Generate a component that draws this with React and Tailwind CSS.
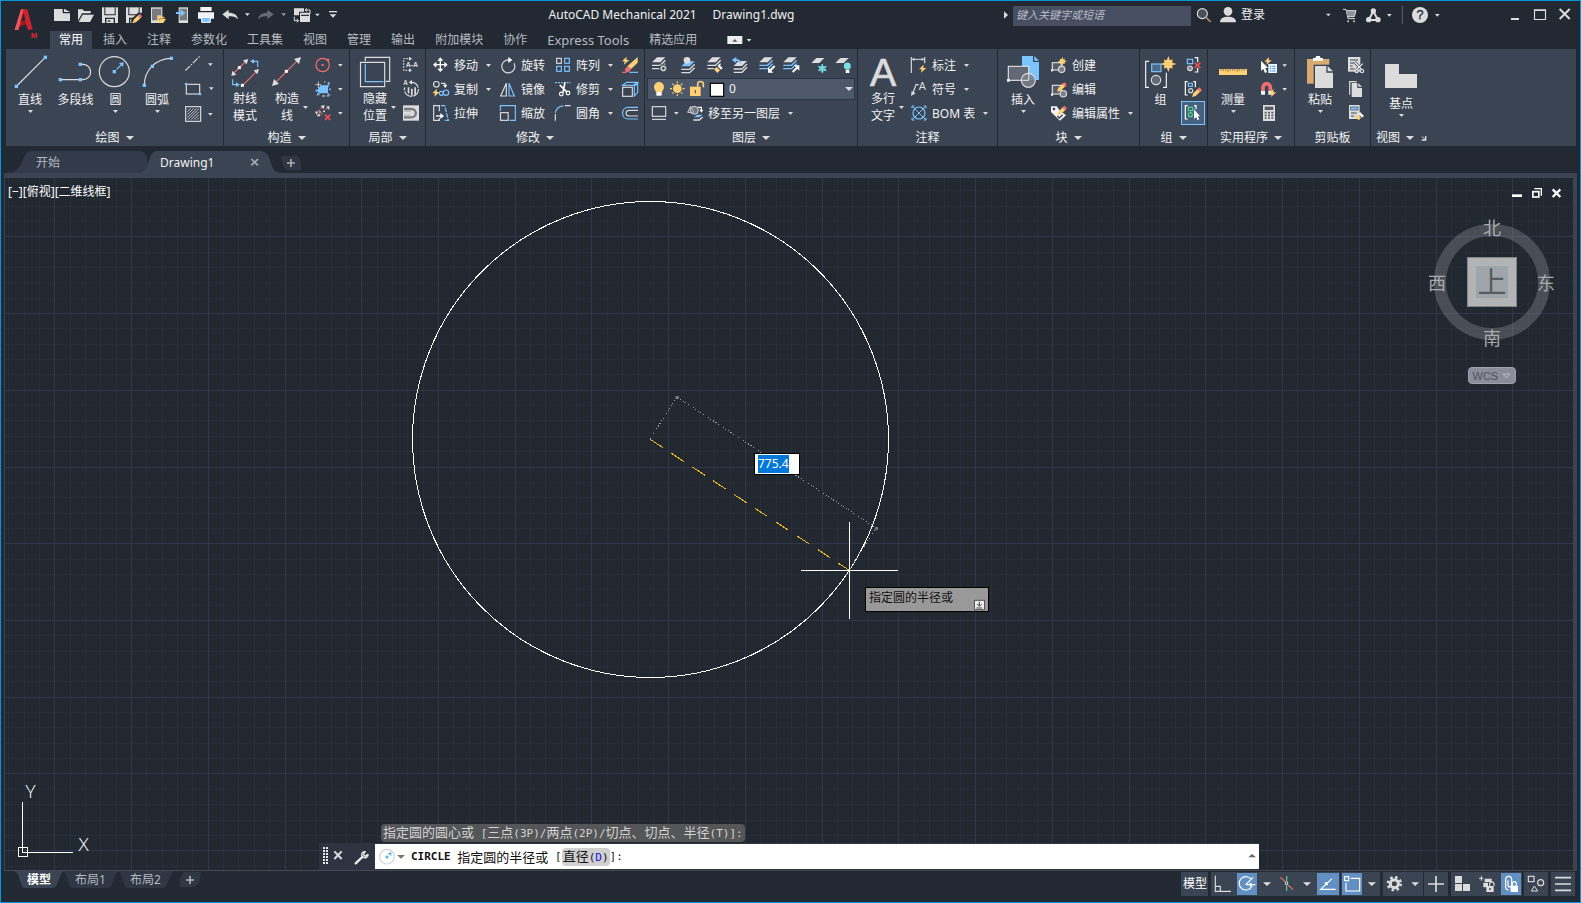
import React from "react";

const L = "#dcdcdc";
const B = "#7cc4ff";
const Y = "#ffd075";
const R = "#f26d6d";
const D = "#222933";
const K = "#3b4453";

/* Icons are drawn on a grid of three units per pixel. */
function Ico({ v, children, className = "" }) {
  return (
    <svg
      aria-hidden="true"
      className={"block shrink-0 " + className}
      width={v[2] / 3}
      height={v[3] / 3}
      viewBox={v.join(" ")}
      fill="none"
      stroke={L}
      strokeWidth="3.5"
    >
      {children}
    </svg>
  );
}

const P = ({ d, c = L, w, ...o }) => <path d={d} stroke={c} strokeWidth={w} {...o} />;
const F = ({ d, c = L }) => <path d={d} fill={c} stroke="none" />;
const Sq = ({ x, y, c = B, s = 10 }) => (
  <rect x={x - s / 2} y={y - s / 2} width={s} height={s} fill={c} stroke="none" />
);
const Tri = ({ x, y, c = L, w = 7 }) => <F d={`M${x - w} ${y - 4}H${x + w}L${x} ${y + 4}Z`} c={c} />;
const Bolt = ({ x, y }) => (
  <F d={`M${x + 3} ${y - 12}L${x - 11} ${y + 2}H${x - 3}L${x - 5} ${y + 12}L${x + 11} ${y - 2}H${x + 2}Z`} c={Y} />
);
const Pencil = ({ x, y }) => (
  <>
    <F d={`M${x} ${y}L${x + 4} ${y - 11}L${x + 18} ${y - 25}L${x + 26} ${y - 17}L${x + 11} ${y - 3}Z`} c={Y} />
    <F d={`M${x + 16} ${y - 23}L${x + 22} ${y - 29}L${x + 30} ${y - 21}L${x + 24} ${y - 15}Z`} c={R} />
  </>
);
const Star = ({ x, y, r }) => {
  const pts = [];
  for (let i = 0; i < 16; i++) {
    const q = i % 2 ? r * 0.5 : i % 4 ? r * 0.8 : r;
    const a = (i * Math.PI) / 8;
    pts.push(`${x + q * Math.sin(a)} ${y - q * Math.cos(a)}`);
  }
  return <F d={"M" + pts.join("L") + "Z"} c={Y} />;
};
const Stack = ({ x, y, top = L, mid = L, low = L }) => (
  <>
    <F d={`M${x + 15} ${y}H${x + 40}L${x + 25} ${y + 15}H${x}Z`} c={top} />
    <P d={`M${x} ${y + 24}H${x + 25}L${x + 40} ${y + 9}`} c={mid} w="4" />
    <P d={`M${x} ${y + 34}H${x + 25}L${x + 40} ${y + 19}`} c={low} w="4" />
  </>
);
const Floppy = ({ x }) => (
  <>
    <F d={`M${x} 22H${x + 48}V69H${x}Z`} />
    <F d={`M${x + 7} 22H${x + 10}V43H${x + 38}V22H${x + 41}V46H${x + 7}ZM${x + 9} 53H${x + 39}V69H${x + 9}Z`} c={D} />
    <F d={`M${x + 13} 57H${x + 35}V69H${x + 13}Z`} />
    <F d={`M${x + 17} 61H${x + 25}V65H${x + 17}Z`} c={D} />
  </>
);

function Caret({ big = false, className = "" }) {
  return big ? (
    <svg aria-hidden="true" className={"shrink-0 " + className} width="8" height="4" viewBox="0 0 8 4"><path d="M0 0H8L4 4Z" fill={L} /></svg>
  ) : (
    <svg aria-hidden="true" className={"shrink-0 " + className} width="5" height="3" viewBox="0 0 5 3"><path d="M0 0H5L2.5 3Z" fill={L} /></svg>
  );
}

function Panel({ title, className, arrow = true, extra, children }) {
  return (
    <section aria-label={title} className={"flex shrink-0 flex-col bg-[#3b4453] pt-1 " + className}>
      <div className="flex h-[72px]">{children}</div>
      <div className="flex h-[21px] items-center justify-center gap-1.5 pt-1">
        <span>{title}</span>
        {arrow && <Caret big />}
        {extra}
      </div>
    </section>
  );
}

function Big({ v, label, arrow = true, children }) {
  return (
    <button type="button" className="flex shrink-0 flex-col items-center">
      <Ico v={v}>{children}</Ico>
      <span className="h-[19px] leading-5">{label}</span>
      {arrow && <Caret className="mt-px" />}
    </button>
  );
}

function Big2({ v, a, b, arrow = true, children }) {
  return (
    <button type="button" className="flex shrink-0 flex-col items-center" aria-label={a + b}>
      <Ico v={v} className="overflow-visible">{children}</Ico>
      <span className="grid grid-cols-[9px_auto_9px] items-center leading-[17px]">
        <span />
        <span className="text-center">{a}<br />{b}</span>
        {arrow && <Caret className="justify-self-end" />}
      </span>
    </button>
  );
}

function Small({ v, label, arrow, name, active, children }) {
  return (
    <button
      type="button"
      aria-label={label || name}
      className={"flex h-6 items-center whitespace-nowrap text-left " + (active ? "bg-[#46617f] outline outline-1 -outline-offset-1 outline-[#7cc4ff]" : "")}
    >
      <Ico v={v}>{children}</Ico>
      {label && <span className="pt-0.5">{label}</span>}
      {arrow && <Caret className="ml-2" />}
    </button>
  );
}

const Col = ({ children, className = "" }) => <div className={"flex shrink-0 flex-col items-start " + className}>{children}</div>;

function QuickButton({ v, name, children }) {
  return <button type="button" aria-label={name} title={name}><Ico v={v}>{children}</Ico></button>;
}

function Header() {
  const tabs = ["插入", "注释", "参数化", "工具集", "视图", "管理", "输出", "附加模块", "协作"];
  return (
    <header className="flex">
      <button type="button" aria-label="AutoCAD" className="w-[49px] shrink-0">
        <Ico v={[3, 3, 147, 144]}>
          <F d="M44 90L63 28H82L98 88L84 90L78 72L58 80L55 90ZM62 66L76 61L71 40Z" c="#c9232d" />
          <F d="M44 90L63 28H70L55 90Z" c="#e8575c" />
          <F d="M58 80L74 58L78 72Z" c="#8e1820" />
          <text x="92" y="113" fontSize="23" fontWeight="700" fontFamily="Liberation Sans, sans-serif" fill="#e02a2f" stroke="none">M</text>
        </Ico>
      </button>
      <div className="min-w-0 grow">
        <div className="flex h-[30px] items-center">
          <QuickButton name="新建" v={[150, 3, 72, 90]}>
            <F d="M162 27H188V40H210V63H162Z" /><F d="M192 26L210 36H192Z" />
          </QuickButton>
          <QuickButton name="打开" v={[222, 3, 72, 90]}>
            <F d="M234 62V28H248L252 33H272V40H246Z" /><F d="M248 44H282L270 66H236Z" />
          </QuickButton>
          <QuickButton name="保存" v={[294, 3, 72, 90]}><Floppy x={306} /></QuickButton>
          <QuickButton name="另存为" v={[366, 3, 72, 90]}>
            <Floppy x={378} /><F d="M394 72V58L414 38H430V72Z" c={D} /><Pencil x={397} y={70} />
          </QuickButton>
          <QuickButton name="从移动设备打开" v={[438, 3, 72, 90]}>
            <F d="M453 22H487V69H453Z" /><F d="M456 26H484V61H456Z" c="#777b80" />
            <F d="M472 69V46H482L485 50H493V54H480Z" c={Y} /><F d="M482 56H498L490 69H474Z" c={Y} />
          </QuickButton>
          <QuickButton name="保存到移动设备" v={[510, 3, 72, 90]}>
            <F d="M536 22H564V69H536Z" /><F d="M539 26H561V61H539Z" c="#777b80" />
            <F d="M528 36H542V28L556 39L542 50V42H528Z" c={B} />
          </QuickButton>
          <QuickButton name="打印" v={[582, 3, 72, 90]}>
            <F d="M601 21H635V33H601ZM594 37H642V56H594Z" c="#f2f2f2" /><path d="M605 52H631V67H605Z" fill={B} stroke="#fff" strokeWidth="3" />
          </QuickButton>
          <QuickButton name="放弃" v={[654, 3, 108, 90]}>
            <F d="M667 43L686 29V38C702 38 712 44 714 58C706 50 700 48 686 49V58Z" /><Tri x={742} y={44} />
          </QuickButton>
          <QuickButton name="重做" v={[762, 3, 108, 90]}>
            <F d="M821 43L802 29V38C786 38 776 44 774 58C782 50 788 48 802 49V58Z" c="#646a73" /><Tri x={851} y={44} c="#9a9ea5" />
          </QuickButton>
          <QuickButton name="切换窗口" v={[870, 3, 102, 90]}>
            <F d="M882 25H912V35H897V46H882ZM900 38H930V66H900Z" /><P d="M903 46H927" c={D} />
            <P d="M930 42V30H916M921 25L915 30L921 35M883 50V62H895M890 57L896 62L890 67" w="3" /><Tri x={952} y={45} />
          </QuickButton>
          <QuickButton name="自定义" v={[972, 3, 54, 90]}>
            <P d="M987 35H1011" w="4" /><F d="M989 43H1009L999 53Z" />
          </QuickButton>
          <h1 className="flex grow justify-center gap-4 whitespace-nowrap pb-0.5 text-[#f0f0f0]">
            <span>AutoCAD Mechanical 2021</span><span>Drawing1.dwg</span>
          </h1>
          <Ico v={[180, 3, 36, 90]}><F d="M189 34L201 45L189 56Z" /></Ico>
          <input aria-label="搜索" placeholder="键入关键字或短语" className="h-5 w-[178px] bg-[#474e61] px-[3px] pb-1 text-[11px] italic placeholder:text-[#b9bdc6]" />
          <QuickButton name="搜索" v={[753, 3, 75, 90]}>
            <circle cx="787" cy="41" r="15" fill="#4a5059" /><P d="M799 53L812 66" c="#b98a5c" w="5" />
          </QuickButton>
          <button type="button" className="flex items-center text-[#f0f0f0]">
            <Ico v={[828, 3, 75, 90]}><circle cx="864" cy="34" r="13" fill={L} stroke="none" /><F d="M840 67C840 54 850 50 864 50S888 54 888 67Z" /></Ico>
            <span className="pb-0.5">登录</span>
            <Ico v={[45, 3, 210, 90]}><Tri x={235} y={45} /></Ico>
          </button>
          <QuickButton name="应用商店" v={[255, 3, 81, 90]}>
            <P d="M279 28H288L294 56H315" w="3" /><F d="M289 32H318L313 50H293Z" c="#8f9296" /><P d="M289 32H318L313 50H293" w="3" />
            <Sq x={294} y={64} c={L} s={5} /><Sq x={312} y={64} c={L} s={5} />
          </QuickButton>
          <QuickButton name="Autodesk" v={[336, 3, 108, 90]}>
            <P d="M370 34L356 60H384Z" w="6" /><Tri x={418} y={46} />
            <circle cx="370" cy="33" r="8" fill={L} stroke="none" /><circle cx="356" cy="59" r="8" fill={L} stroke="none" /><circle cx="384" cy="59" r="8" fill={L} stroke="none" />
          </QuickButton>
          <QuickButton name="帮助" v={[444, 3, 144, 90]}>
            <P d="M457 18V72" c="#5b6376" w="3" /><circle cx="510" cy="45" r="24" fill={L} stroke="none" />
            <text x="510" y="58" textAnchor="middle" fontSize="38" fontFamily="Liberation Sans, sans-serif" fill={D} stroke={D} strokeWidth="1">?</text>
            <Tri x={562} y={46} />
          </QuickButton>
          <span className="w-[57px]" />
          <QuickButton name="最小化" v={[759, 3, 75, 90]}><P d="M783 57H807" w="6" /></QuickButton>
          <QuickButton name="最大化" v={[834, 3, 75, 90]}><P d="M853.5 29.5H886.5V58.5H853.5ZM853 31H887" /></QuickButton>
          <QuickButton name="关闭" v={[909, 3, 81, 90]}><P d="M929 27L959 57M959 27L929 57" w="6" /></QuickButton>
        </div>
        <nav className="flex h-[18px] items-center whitespace-nowrap leading-[18px] text-[#b6bac0]">
          <button type="button" className="mr-px bg-[#3b4453] px-[9px] text-white">常用</button>
          {tabs.map((t) => <button type="button" key={t} className="px-2.5">{t}</button>)}
          <button type="button" className="px-2.5 text-[13px]">Express Tools</button>
          <button type="button" className="px-2.5">精选应用</button>
          <button type="button" aria-label="最小化面板" className="ml-5">
            <Ico v={[260, 96, 78, 42]}><F d="M261 105H306V129H261Z" c="#eeeeee" /><F d="M276 122H291L283.5 114Z" c="#555" /><Tri x={326} y={118} /></Ico>
          </button>
        </nav>
      </div>
    </header>
  );
}

function Ribbon() {
  return (
    <div className="ml-[5px] mr-[4px] flex h-[97px] gap-px overflow-hidden text-[#f2f2f2]">
      <Panel title="绘图" className="w-[217px]">
        <Big label="直线" v={[18, 159, 144, 111]}><P d="M50 258L136 172" /><Sq x={49} y={259} /><Sq x={136} y={172} /></Big>
        <Big label="多段线" arrow={false} v={[162, 159, 129, 111]}>
          <P d="M241 193H249A23 23 0 0 1 249 239H181" /><Sq x={181} y={239} /><Sq x={241} y={239} /><Sq x={241} y={193} />
        </Big>
        <Big label="圆" v={[291, 159, 111, 111]}>
          <circle cx="343" cy="215" r="45" /><Sq x={343} y={215} /><P d="M350 208L366 192" c={B} /><F d="M357 189L371 187L369 201Z" c={B} />
        </Big>
        <Big label="圆弧" v={[402, 159, 138, 111]}>
          <P d="M433 256C433 212 466 176 514 175" /><Sq x={433} y={256} /><Sq x={457} y={199} /><Sq x={514} y={175} />
        </Big>
        <Col>
          <Small name="中心线" v={[540, 159, 129, 72]}><P d="M556 212L600 168" strokeDasharray="20 4 4 4" /><Tri x={631} y={194} /></Small>
          <Small name="矩形" v={[540, 231, 129, 72]}><rect x="559" y="253" width="40" height="29" /><Sq x={558} y={252} s={7} /><Sq x={600} y={282} s={7} /><Tri x={634} y={266} /></Small>
          <Small name="图案填充" v={[540, 303, 129, 72]}>
            <rect x="557" y="320" width="45" height="44" />
            <P d="M562 335L572 325M562 344L581 325M562 353L590 325M564 359L597 326M573 359L597 335M582 359L597 344M591 359L597 353" w="2.5" /><Tri x={631} y={343} />
          </Small>
        </Col>
      </Panel>

      <Panel title="构造" className="w-[125px]">
        <Big2 a="射线" b="模式" arrow={false} v={[672, 159, 126, 111]}>
          <P d="M698 222L740 182M728 256L772 212" c={R} /><F d="M694 228L697 212L709 224ZM745 177L729 181L740 193ZM777 207L761 211L772 223Z" />
          <Sq x={718} y={203} c="#fff" s={9} /><Sq x={727} y={256} c="#fff" s={9} />
          <P d="M773 201V184H757M698 238V254H712" c={B} /><F d="M750 184L762 177V191ZM720 254L708 247V261Z" c={B} />
        </Big2>
        <Big2 a="构造" b="线" v={[798, 159, 126, 111]}>
          <P d="M824 250L896 178" c={R} /><F d="M816 258L822 237L837 252ZM903 171L882 177L897 192Z" /><Sq x={859} y={214} c="#fff" s={9} />
        </Big2>
        <Col>
          <Small name="构造圆" v={[924, 159, 123, 72]}><circle cx="968" cy="195" r="20" stroke={R} /><Sq x={968} y={195} c={R} s={6} /><Sq x={984} y={180} c={R} s={7} /><Tri x={1021} y={196} /></Small>
          <Small name="投影" v={[924, 231, 123, 72]}>
            <F d="M952 270L962 256H980L988 252L984 264V280H956Z" c={B} /><P d="M946 254H964M955 245V264" w="2.5" />
            <P d="M950 286L956 280M984 280L990 286M972 246H976M966 288H976" w="3" /><Sq x={955} y={283} s={6} /><Sq x={986} y={250} s={6} /><Sq x={950} y={272} s={6} /><Sq x={984} y={287} s={6} /><Sq x={990} y={268} s={5} /><Tri x={1021} y={268} />
          </Small>
          <Small name="删除构造线" v={[924, 303, 123, 72]}>
            <P d="M948 340L966 322M956 350L982 324" c={R} strokeDasharray="5 5" />
            <F d="M962 318L974 315L971 327ZM988 318V330L978 320ZM945 335L950 345L954 334ZM950 350L962 346L956 340Z" />
            <Sq x={960} y={336} c={L} s={5} /><Sq x={972} y={334} c={L} s={5} />
            <P d="M975 344L991 360M991 344L975 360" c="#f0524f" w="5" /><Tri x={1021} y={340} />
          </Small>
        </Col>
      </Panel>

      <Panel title="局部" className="w-[75px]">
        <Big2 a="隐藏" b="位置" v={[30, 159, 150, 111]}>
          <path d="M61.5 187H134V260H61.5Z" /><P d="M76 184V172H149V244H137" /><P d="M76 191V245H130" c={B} />
        </Big2>
        <Col>
          <Small name="剖切线" v={[180, 159, 75, 72]}>
            <P d="M214 176H191V211H214" strokeDasharray="6 3" w="3" /><F d="M207 170L216 176L207 182ZM207 205L216 211L207 217Z" />
            <text x="197" y="201" fontSize="21" fontWeight="700" fontFamily="Liberation Sans, sans-serif" fill={L} stroke="none">A-A</text>
          </Small>
          <Small name="详图" v={[180, 231, 75, 72]}>
            <text x="190" y="256" fontSize="19" fontWeight="700" fontFamily="Liberation Sans, sans-serif" fill={L} stroke="none">A</text>
            <P d="M214 247A21 21 0 1 1 194 262" strokeDasharray="28 4" /><F d="M206 247L216 240V254ZM203 262H208V282L203 278ZM213 266H218V287H213ZM223 262H228V282L223 285Z" />
          </Small>
          <Small name="隐藏线" v={[180, 303, 75, 72]}>
            <rect x="189" y="316" width="48" height="46" fill={L} stroke="none" /><P d="M192 327H214C232 327 232 352 214 352H192" c="#77797c" w="7" /><P d="M192 334H212M192 345H212" c="#999" w="2" />
          </Small>
        </Col>
      </Panel>

      <Panel title="修改" className="w-[218px]">
        <Col className="w-[72px]">
          <Small label="移动" arrow v={[258, 159, 84, 72]}>
            <P d="M301 178V210M285 194H317" c="#fff" w="4" /><F d="M292 182L301 172L310 182ZM292 206L301 216L310 206ZM289 185L279 194L289 203ZM313 185L323 194L313 203Z" c="#fff" />
          </Small>
          <Small label="复制" arrow v={[258, 231, 84, 72]}>
            <circle cx="289" cy="253" r="8.5" /><P d="M303 250H315V256" /><F d="M309 254H322L315.5 264Z" c="#fff" /><circle cx="304" cy="280" r="6" stroke={B} /><circle cx="318" cy="278" r="8" stroke={B} /><Bolt x={288} y={278} />
          </Small>
          <Small label="拉伸" v={[258, 303, 84, 72]}>
            <P d="M298 334V317H281V361H298V354" /><P d="M303 317H314L325 361H312" c={B} strokeDasharray="14 3" /><P d="M288 348H303" c="#fff" w="4" /><F d="M301 339L312 348L301 357Z" c="#fff" />
          </Small>
        </Col>
        <Col className="w-[55px]">
          <Small label="旋转" v={[474, 159, 69, 72]}><P d="M508 180A19.5 19.5 0 1 0 522 190" /><F d="M505 171L517 180L505 189Z" c="#fff" /></Small>
          <Small label="镜像" v={[474, 231, 69, 72]}><P d="M499 250V288H482Z" /><P d="M507 250V288H523Z" c={B} /></Small>
          <Small label="缩放" v={[474, 303, 69, 72]}><P d="M481 333V317H526V361H509" c={B} /><rect x="481.5" y="338" width="23" height="23" /></Small>
        </Col>
        <Col className="w-[64px]">
          <Small label="阵列" arrow v={[639, 159, 69, 72]}><rect x="650" y="175" width="14" height="15" /><rect x="674" y="175" width="14" height="15" stroke={B} /><rect x="650" y="199" width="14" height="15" stroke={B} /><rect x="674" y="199" width="14" height="15" stroke={B} /></Small>
          <Small label="修剪" arrow v={[639, 231, 69, 72]}>
            <P d="M645 248H668" c={B} strokeDasharray="6 3" /><P d="M680 248H692" c={B} strokeDasharray="6 3" />
            <P d="M659 255L682 277M675 246L669 277" c="#fff" w="5" /><circle cx="664" cy="282" r="5.5" stroke="#fff" /><circle cx="684" cy="279" r="5.5" stroke="#fff" />
          </Small>
          <Small label="圆角" arrow v={[639, 303, 69, 72]}><P d="M646 339C648 325 658 319 671 317" c={B} /><P d="M675 317H692M646 342V362" /></Small>
        </Col>
        <Col>
          <Small name="删除" v={[831, 159, 81, 72]}>
            <F d="M893 171V188L873 207L862 199Z" c={Y} /><F d="M863 199L874 208L866 216H857L854 208Z" c={R} /><P d="M846 217H860" c={R} /><P d="M868 217H894" c={B} /><Bolt x={857} y={182} />
          </Small>
          <Small name="分解" v={[831, 231, 81, 72]}><rect x="848" y="262" width="29" height="27" /><P d="M848 256L860 247H892L880 256ZM883 259L893 250V277L883 288Z" c={B} /></Small>
          <Small name="偏移" v={[831, 303, 81, 72]}><P d="M894 322H865C842 322 842 357 865 357H894" c={B} /><P d="M894 331H868C855 331 855 348 868 348H894" /></Small>
        </Col>
      </Panel>

      <Panel title="图层" className="w-[212px]">
        <div className="flex w-full flex-col">
          <div className="flex h-6">
            <Small name="图层特性" v={[15, 159, 90, 72]}><Stack x={36} y={172} /><circle cx="70" cy="205" r="12" fill={K} stroke="none" /><circle cx="70" cy="205" r="6" /><circle cx="70" cy="205" r="9" strokeDasharray="3 4" strokeWidth="3" /></Small>
            <Small name="置为当前" v={[105, 159, 84, 72]}><Stack x={124} y={184} top={B} /><circle cx="141" cy="181" r="10" fill={L} stroke="none" /></Small>
            <Small name="匹配图层" v={[189, 159, 81, 72]}><Stack x={202} y={172} /><F d="M218 210L233 194L250 204L246 215L232 221Z" c={K} /><F d="M222 208L230 201L240 211L232 219Z" c={Y} /><F d="M233 199L237 193L248 205L243 209Z" c="#fff" /></Small>
            <Small name="上一个图层" v={[270, 159, 78, 72]}><Stack x={281} y={183} /><P d="M284 180C294 178 300 184 302 190" c={B} w="5" /><F d="M275 180L289 171V189Z" c={B} /></Small>
            <Small name="隔离" v={[348, 159, 75, 72]}><Stack x={358} y={172} mid={B} low={B} /><F d="M384 218V202L390 208L402 196L406 200L394 212L400 218Z" c="#fff" /></Small>
            <Small name="取消隔离" v={[423, 159, 81, 72]}><Stack x={430} y={172} low={B} mid={B} /><F d="M478 196V212L472 206L460 218L456 214L468 202L462 196Z" c="#fff" /></Small>
            <Small name="冻结" v={[504, 159, 75, 72]}><F d="M529 174H553L538 189H514Z" /><P d="M547 192V219M535 199L559 212M559 199L535 212" c="#74dfe6" w="4" /><circle cx="547" cy="206" r="8" stroke="#74dfe6" strokeWidth="3" /></Small>
            <Small name="关闭图层" v={[579, 159, 72, 72]}><F d="M601 174H626L611 189H586Z" /><circle cx="622" cy="198" r="10.5" fill="#74dfe6" stroke="none" /><F d="M617 209H628V219H617Z" c="#fff" /></Small>
          </div>
          <div className="mx-0.5 mt-px flex h-[22px] items-center border border-[#2b3240] bg-[#4d586b]">
            <Ico v={[24, 237, 234, 60]}>
              <circle cx="57" cy="261" r="15" fill={Y} stroke="none" /><F d="M49 276H65V287H49Z" c="#fff" /><F d="M47 268H67V276H47Z" c={Y} />
              <circle cx="112" cy="266" r="13" fill={Y} stroke="none" /><P d="M112 244V250M112 282V288M90 266H96M128 266H134M97 251L101 255M123 277L127 281M97 281L101 277M123 255L127 251" c={Y} />
              <F d="M150 260H182V288H150Z" c={Y} /><P d="M173 260V253A8 8 0 0 1 190 253V262" c={Y} w="5" /><P d="M166 270V280" c="#6a5a33" />
              <rect x="211" y="250" width="40" height="39" fill="#fff" stroke="#000" />
            </Ico>
            <select aria-label="图层" className="h-5 min-w-0 grow appearance-none bg-transparent pl-[3px] text-[#f2f2f2]"><option>0</option></select>
            <Caret big className="mr-px" />
          </div>
          <div className="mt-px flex h-6">
            <Small name="图层状态" v={[15, 303, 114, 72]}><rect x="37" y="320" width="40" height="29" /><P d="M36 358H78" /><Tri x={109} y={340} /></Small>
            <Small label="移至另一图层" arrow v={[129, 303, 75, 72]}>
              <P d="M152 319L143 337H162Z" w="3" /><circle cx="163" cy="331" r="12" fill="#8a8f97" fillOpacity=".7" stroke={L} strokeWidth="3" /><P d="M174 322H184V330" c="#fff" /><F d="M178 329H190L184 338Z" c="#fff" />
              <F d="M172 344H188L178 352H162Z" c={B} /><P d="M160 360H178L188 351" w="4" />
            </Small>
          </div>
        </div>
      </Panel>

      <Panel title="注释" arrow={false} className="w-[139px]">
        <Big2 a="多行" b="文字" v={[654, 159, 150, 111]}><text x="729" y="258" textAnchor="middle" fontSize="118" fontFamily="Liberation Sans, sans-serif" fill={L} strokeWidth="2">A</text></Big2>
        <Col>
          <Small label="标注" arrow v={[804, 159, 72, 72]}><P d="M814 171V219M854 171V190" /><P d="M818 178H850" w="3" /><F d="M815 178L823 173V183ZM853 178L845 173V183Z" /><Bolt x={848} y={206} /></Small>
          <Small label="符号" arrow v={[804, 231, 72, 72]}><P d="M820 276L828 254H836" /><F d="M813 288L815 273L827 280Z" /><text x="836" y="270" fontSize="32" fontFamily="Liberation Sans, sans-serif" fill={L} stroke="none">A</text></Small>
          <Small label="BOM 表" arrow v={[804, 303, 72, 72]}><circle cx="837" cy="339" r="18" stroke={B} /><P d="M817 319L857 359M857 319L817 359" c={B} w="3" /><P d="M816 325V318H823M851 318H858V325M858 353V360H851M823 360H816V353" c={B} w="3" /></Small>
        </Col>
      </Panel>

      <Panel title="块" className="w-[141px]">
        <Big label="插入" v={[174, 159, 150, 111]}>
          <F d="M246 168H279V186H297V240H246ZM283 168L297 182H283Z" c={B} /><rect x="205" y="199" width="61" height="42" fill="#646a75" /><circle cx="265" cy="241" r="21" fill="#7b818b" fillOpacity=".85" /><P d="M244 241H266V222" w="3" /><Sq x={205} y={241} c="#fff" s={8} />
        </Big>
        <Col>
          <Small label="创建" v={[324, 159, 72, 72]}><rect x="337" y="188" width="27" height="22" fill="#565d69" /><circle cx="365" cy="208" r="9.5" fill="#7b818b" /><Sq x={336} y={211} c="#fff" s={6} /><Star x={367} y={184} r={14} /></Small>
          <Small label="编辑" v={[324, 231, 72, 72]}><rect x="337" y="256" width="27" height="26" fill="#565d69" /><circle cx="370" cy="281" r="9.5" fill="#7b818b" /><Sq x={336} y={284} c="#fff" s={6} /><Pencil x={351} y={275} /></Small>
          <Small label="编辑属性" arrow v={[324, 303, 72, 72]}><F d="M333 319H350L360 332L378 346L360 362L333 336Z" c="#f2f2f2" /><circle cx="342" cy="327" r="4" fill={K} stroke="none" /><P d="M352 348L358 354L368 344" c={K} w="4" /><Pencil x={351} y={346} /></Small>
        </Col>
      </Panel>

      <Panel title="组" className="w-[67px]">
        <Big label="组" arrow={false} v={[600, 159, 123, 111]}>
          <P d="M627 184H617V262H627M669 262H679V218" c="#f2f2f2" /><rect x="635" y="192" width="28" height="23" stroke={B} fill="#4a6b8c" /><circle cx="648" cy="240" r="14" fill="#646a75" /><Star x={685} y={192} r={24} />
        </Big>
        <Col>
          <Small name="解除编组" v={[723, 159, 78, 72]}><rect x="742" y="178" width="16" height="13" stroke={B} /><circle cx="750" cy="205" r="7" fill="#7b818b" /><P d="M764 173H773V187M773 204V216H764" c="#fff" /><P d="M764 188L781 204M781 188L764 204" c="#f0524f" w="5" /></Small>
          <Small name="组编辑" v={[723, 231, 78, 72]}><P d="M743 245H736V285H743M760 245H766V262" c="#fff" /><rect x="745" y="250" width="12" height="9" stroke={B} /><circle cx="752" cy="272" r="6" /><Pencil x={756} y={291} /></Small>
          <Small name="启用组选择" active v={[723, 303, 72, 72]}><P d="M743 317H736V357H743M762 317H768V328" c="#fff" /><rect x="745" y="322" width="13" height="10" stroke="#55d884" /><circle cx="751" cy="344" r="6" stroke="#55d884" /><F d="M762 328V357L768 351L773 361L778 358L773 349H780Z" c="#fff" /></Small>
        </Col>
      </Panel>

      <Panel title="实用程序" className="w-[86px]">
        <Big label="测量" v={[804, 159, 150, 111]}>
          <F d="M837 207H921V225H837Z" c={Y} /><P d="M843 207V213M850 207V213M857 207V213M864 207V216M871 207V213M878 207V213M885 207V213M892 207V216M899 207V213M906 207V213M913 207V213" c="#8a7444" w="2.5" />
        </Big>
        <Col>
          <Small name="快速选择" v={[24, 159, 108, 72]}><Bolt x={54} y={183} /><F d="M33 182V212L40 207L45 219L51 216L46 204H54Z" c="#fff" /><F d="M55 192H81V219H55Z" c="#eef6ff" /><P d="M60 199H64M60 206H64M60 213H64M67 199H76M67 206H76M67 213H76" c="#2f8fd8" w="3" /><Tri x={104} y={197} /></Small>
          <Small name="对象捕捉" v={[24, 231, 108, 72]}><P d="M39 272V262A11 11 0 0 1 61 262V272" c={R} w="11" /><F d="M33 272H45V284H33ZM55 272H66V284H55Z" c="#f2f2f2" /><Bolt x={68} y={279} /><Tri x={104} y={268} /></Small>
          <Small name="计算器" v={[24, 303, 108, 72]}><F d="M39 315H75V363H39Z" /><F d="M44 320H70V330H44Z" c="#555b66" /><P d="M44 338H50M54 338H60M64 338H70M44 346H50M54 346H60M64 346H70M44 354H50M54 354H60M64 354H70" c="#555b66" w="5" /></Small>
        </Col>
      </Panel>

      <Panel title="剪贴板" arrow={false} className="w-[75px]">
        <Big label="粘贴" v={[135, 159, 150, 111]}>
          <F d="M171 177H238V251H171Z" c="#d9ab72" /><F d="M189 182V174H196L199 168H209L212 174H219V182Z" c="#fff" /><F d="M191 194H252V267H191Z" c={K} /><F d="M195 198H229V218H249V264H195ZM233 198L249 214H233Z" />
        </Big>
        <Col>
          <Small name="剪切" v={[285, 159, 75, 72]}><F d="M294 171H331V215H294Z" /><P d="M300 180H324M300 189H312M300 198H308M300 207H314" c={K} w="3" /><P d="M314 186L337 211M340 190L318 211" c={K} w="8" /><P d="M314 186L335 209M338 191L320 209" c="#fff" /><circle cx="320" cy="213" r="5" /><circle cx="336" cy="213" r="5" /></Small>
          <Small name="复制" v={[285, 231, 75, 72]}><P d="M299 284V245H320" /><F d="M305 249H322V264H336V291H305ZM325 249L336 260H325Z" /></Small>
          <Small name="特性匹配" v={[285, 303, 75, 72]}><F d="M297 315H329V357H297Z" /><F d="M301 320H325V331H301Z" c={K} /><F d="M303 322H323V329H303Z" c={B} /><P d="M303 339H320M303 348H312" c={K} w="3" /><F d="M316 351L323 344L333 354L326 361Z" c={Y} /><F d="M326 342L330 336L342 348L336 353Z" c="#fff" /></Small>
        </Col>
      </Panel>

      <section aria-label="视图" className="flex min-w-0 grow flex-col bg-[#3b4453] pt-1">
        <div className="flex h-[72px]">
          <button type="button" className="flex flex-col items-center">
            <Ico v={[363, 159, 180, 123]}><F d="M405 192H447V222H501V264H405Z" /></Ico>
            <span className="h-[19px] leading-5">基点</span>
            <Caret className="mt-px" />
          </button>
        </div>
        <div className="flex h-[21px] items-center gap-1.5 pl-[5px] pt-1">
          <span>视图</span><Caret big />
          <Ico v={[508, 400, 24, 24]}><P d="M514 407L524 417" w="3" /><F d="M527 406V420H513V416H523V406Z" /></Ico>
        </div>
      </section>
    </div>
  );
}

function DocTabs() {
  return (
    <div className="flex h-[27px] items-end overflow-hidden pl-[6px]">
      <div className="flex h-[22px] text-[#b6bac0]">
        <svg aria-hidden="true" width="24" height="22"><path d="M0 22C18 22 14 0 24 0V22Z" fill="#333b4a" /></svg>
        <button type="button" className="w-[116px] rounded-tr-lg bg-[#333b4a] pl-[5px] text-left leading-[21px]">开始</button>
      </div>
      <div className="-ml-2 flex h-[22px] text-[#f0f0f0]">
        <svg aria-hidden="true" width="18" height="22"><path d="M0 22C11 22 8 0 18 0V22Z" fill="#3b4453" /></svg>
        <div className="flex w-[102px] items-center justify-between bg-[#3b4453] pl-[3px]">
          <button type="button" className="leading-[21px]">Drawing1</button>
          <button type="button" aria-label="关闭 Drawing1"><Ico v={[750, 474, 27, 27]}><P d="M754 477L774 496M774 477L754 496" c="#a9adb4" w="5" /></Ico></button>
        </div>
        <svg aria-hidden="true" width="22" height="22"><path d="M0 0C16 0 8 22 22 22H0Z" fill="#3b4453" /></svg>
      </div>
      <button type="button" aria-label="新图形" className="mb-[3px]">
        <Ico v={[840, 468, 64, 42]}><F d="M840 468H885C897 468 900 480 901 510H862C848 510 845 490 840 468Z" c="#2f3644" /><P d="M858 489H882M870 477V501" c="#a9adb4" w="5" /></Ico>
      </button>
    </div>
  );
}

const STEP = 76.74;
function gridLines(start, step, skip) {
  const out = [];
  for (let i = -5; i < 260; i++) {
    if (skip && i % 5 === 0) continue;
    out.push(Math.round(start + i * step) + 0.5);
  }
  return out;
}
const path = (xs, ys) => xs.map((x) => `M${x} 0V4000`).join("") + ys.map((y) => `M0 ${y}H4000`).join("");
const minor = path(gridLines(54.3, STEP / 5, true), gridLines(236.3, STEP / 5, true));
const major = path(gridLines(54.3, STEP), gridLines(236.3, STEP));

function ViewCube() {
  return (
    <div className="absolute right-3 top-[34px] flex w-[139px] flex-col items-center font-['Liberation_Serif','Noto_Sans_CJK_SC',serif] text-[18px] leading-[22px] text-[#a9abab]">
      <svg aria-label="ViewCube" width="139" height="140" viewBox="1422 212 139 140" fill="currentColor" textAnchor="middle">
        <circle cx="1492" cy="282" r="52" fill="none" stroke="#8f949a" strokeOpacity=".36" strokeWidth="12" />
        <text x="1492" y="235">北</text>
        <text x="1492" y="345">南</text>
        <text x="1437" y="290">西</text>
        <text x="1546" y="290">东</text>
        <rect x="1467.5" y="257.5" width="49" height="49" fill="#b1b3b5" stroke="#7f8586" />
        <rect x="1476" y="266" width="32" height="32" fill="#9fa6ab" />
        <text x="1492" y="293" fontSize="29" fill="#545c62">上</text>
      </svg>
      <button type="button" className="mt-[15px] flex h-[17px] w-12 items-center justify-between rounded border border-[#a0a1ae] bg-[#8b8d9b] px-1 font-['Liberation_Sans',sans-serif] text-[11px] leading-4 text-[#50525c]">
        WCS
        <svg aria-hidden="true" width="9" height="6" fill="none"><path d="M1 1H8L4.5 5Z" stroke="#b9bac4" /></svg>
      </button>
    </div>
  );
}

const Mono = ({ children, className = "" }) => <span className={"whitespace-pre font-['DejaVu_Sans_Mono',monospace] text-[11px] " + className}>{children}</span>;

function Canvas() {
  return (
    <main className="relative mx-[3px] min-h-[600px] grow overflow-hidden border-b border-l border-r-4 border-t-[5px] border-[#3b4453] border-b-[#454a52] bg-[#212830]">
      <svg aria-hidden="true" className="absolute inset-0 h-full w-full" fill="none">
        <g transform="translate(-5 -178)">
          <path d={minor} stroke="#272d39" />
          <path d={major} stroke="#31374a" />
          <g shapeRendering="crispEdges">
            <circle cx="650.5" cy="439.5" r="238" stroke="#fff" />
            <path d="M650 439L677 397L876 528L849 570" stroke="#9a9da2" strokeDasharray="1 2" />
            <path d="M650.5 439.5L849.5 570.5" stroke="#f5b921" strokeDasharray="15 10" />
            <path d="M801 570.5H898M849.5 522V619" stroke="#fff" />
          </g>
          <path d="M675.5 396H679V399H675.5ZM875 527H878V530H875Z" fill="#74777b" />
        </g>
      </svg>
      <svg aria-label="UCS" className="absolute bottom-2 left-2" width="84" height="84" viewBox="13 778 84 84" fill="none" stroke="#fff">
        <path d="M22.5 802V852.5H73M18.5 847.5H27.5V856.5H18.5Z" shapeRendering="crispEdges" />
        <g fill="#fff" stroke="none" fontFamily="Open Sans, sans-serif" fontWeight="300" fontSize="19" textAnchor="middle">
          <text x="30.5" y="798">Y</text>
          <text x="83.5" y="851">X</text>
        </g>
      </svg>
      <p className="absolute left-[3px] top-[5px] flex text-[12px] leading-[18px] text-white">
        <button type="button">[−]</button><button type="button">[俯视]</button><button type="button">[二维线框]</button>
      </p>
      <div className="absolute right-[5px] top-[7px] flex">
        <QuickButton name="最小化视口" v={[324, 45, 60, 48]}><P d="M336 77H366" c="#fff" w="8" /></QuickButton>
        <QuickButton name="还原视口" v={[384, 45, 60, 48]}><rect x="398.5" y="65" width="18" height="16" stroke="#fff" strokeWidth="5" /><P d="M403 56H424V77" c="#fff" w="4" /></QuickButton>
        <QuickButton name="关闭视口" v={[444, 45, 60, 48]}><P d="M458 58L481 81M481 58L458 81" c="#fff" w="7" /></QuickButton>
      </div>
      <ViewCube />
      <input aria-label="半径" defaultValue="775.4" className="absolute left-[749px] top-[275px] h-[22px] w-[46px] border border-black bg-[linear-gradient(#0078d7,#0078d7)] bg-[length:31px_18px] bg-[position:3px_1px] bg-no-repeat pb-0.5 pl-[3px] text-[12px] text-white [background-color:#fff]" />
      <div className="absolute left-[860px] top-[409px] flex h-[25px] w-[124px] items-center justify-between border border-black bg-[#999] px-[3px] text-[#111]">
        <span className="pb-1 text-[12px]">指定圆的半径或</span>
        <Ico v={[702, 465, 33, 36]} className="self-end"><rect x="703.5" y="469" width="30" height="28" fill="#eee" stroke="#555" strokeWidth="3" /><P d="M718 473V486M711 480L718 487L725 480M709 492H727" c="#444" w="3" /></Ico>
      </div>
      <div className="absolute inset-x-[314px] bottom-0 flex flex-col items-start">
        <div className="mb-px ml-[62px] rounded-sm bg-[#555658] px-0.5 text-[13px] leading-4 text-[#d4d4d4]">
          指定圆的圆心或<Mono> [</Mono>三点<Mono>(3P)/</Mono>两点<Mono>(2P)/</Mono>切点、切点、半径<Mono>(T)]:</Mono>
        </div>
        <div className="flex h-[27px] w-full items-center bg-[#2d3340]">
          <Ico v={[27, 99, 168, 81]}>
            <P d="M42 111V162M51 111V162" c="#e8e8e8" w="6" strokeDasharray="6 3" />
            <P d="M73 124L95 147M95 124L73 147" w="6" />
            <P d="M137 160L157 141" c="#eee" w="7" strokeLinecap="round" /><P d="M166 125C155 124 152 136 158 141C166 147 176 141 174 133L165 139L160 133Z" c="#eee" w="4" strokeLinejoin="round" />
          </Ico>
          <div className="flex h-[25px] grow items-center bg-white text-[13px] text-[#111]">
            <Ico v={[195, 99, 108, 81]}><circle cx="231" cy="140" r="22" stroke="#cfd3d8" /><Sq x={231} y={141} s={8} c="#4fb0ee" /><F d="M233 130L244 127V138Z" c="#4fb0ee" /><F d="M261 135H285L273 146Z" c="#777" /></Ico>
            <Mono className="font-bold">CIRCLE </Mono>指定圆的半径或<Mono> [</Mono>
            <button type="button" className="rounded-sm bg-[#d0d0d0] px-px leading-4">直径<Mono>(<span className="text-[#1414e6]">D</span>)</Mono></button>
            <Mono>]:</Mono>
            <input aria-label="命令" className="h-5 min-w-0 grow bg-transparent outline-none" />
            <Ico v={[252, 99, 42, 81]}><F d="M262 142H285L273 132Z" c="#666" /></Ico>
          </div>
        </div>
      </div>
    </main>
  );
}

function Status({ v, name, on, className = "", children }) {
  return (
    <button type="button" aria-label={name} title={name} className={(on ? "bg-[#6390c2] outline outline-1 -outline-offset-1 outline-[#3b4453] " : "bg-[#3b4453] ") + className}>
      <Ico v={v}>{children}</Ico>
    </button>
  );
}

function LayoutTab({ active, children }) {
  const fill = active ? "#3b4453" : "#2f3644";
  return (
    <div className="-mr-1 flex h-[17px]">
      <svg aria-hidden="true" width="12" height="17"><path d="M0 0C8 0 6 17 12 17V0Z" fill={fill} /></svg>
      <button type="button" className={"px-0.5 leading-[16px] " + (active ? "bg-[#3b4453] font-bold text-white" : "bg-[#2f3644] text-[#b6bac0]")}>{children}</button>
      <svg aria-hidden="true" width="12" height="17"><path d="M0 17C6 17 6 0 12 0H0Z" fill={fill} /></svg>
    </div>
  );
}

function Footer() {
  return (
    <footer className="flex h-[31px] items-start justify-between pl-3 pr-[5px]">
      <nav className="flex">
        <LayoutTab active>模型</LayoutTab>
        <LayoutTab>布局1</LayoutTab>
        <LayoutTab>布局2</LayoutTab>
        <button type="button" aria-label="新建布局" className="ml-2">
          <Ico v={[525, 393, 69, 48]}><F d="M540 393H591C590 425 580 438 562 438H526C526 425 530 400 540 393Z" c="#2f3644" /><P d="M546 417H570M558 405V429" c="#b0b4ba" w="5" /></Ico>
        </button>
      </nav>
      <div className="flex pt-px">
        <button type="button" className="mr-[3px] h-6 w-[27px] whitespace-nowrap bg-[#3b4453] pl-px text-[12px] text-white">模型</button>
        <Status name="正交" v={[153, 186, 75, 72]}><P d="M166 197V244H213M166 229H181V244" /></Status>
        <Status name="极轴追踪" on v={[228, 186, 66, 72]}><P d="M275 210A20 20 0 1 0 276 228M257 224H286M257 224L279 202" c="#fff" /><F d="M279 224L269 217V231Z" c="#fff" /></Status>
        <Status name="极轴设置" v={[294, 186, 51, 72]}><F d="M309 217H333L321 228Z" /></Status>
        <Status name="等轴测草图" v={[345, 186, 123, 72]}><P d="M380 198V213" c="#5fd38a" /><P d="M380 226V243" c="#5fd38a" /><P d="M361 202L375 215M384 225L399 239" c={R} /><rect x="376" y="216" width="7" height="7" strokeWidth="2.5" /><F d="M429 217H453L441 228Z" /></Status>
        <Status name="对象捕捉追踪" on className="mr-px" v={[468, 186, 72, 72]}><P d="M516 206L482 238H527" c="#fff" /><Sq x={499} y={221} c="#fff" s={9} /></Status>
        <Status name="二维对象捕捉" on v={[543, 186, 66, 72]}><P d="M572 205H599V243H558V218" c="#fff" /><rect x="554" y="200" width="12" height="12" stroke="#fff" /></Status>
        <Status name="捕捉设置" className="mr-[3px]" v={[609, 186, 51, 72]}><F d="M623 217H648L635.5 228Z" /></Status>
        <Status name="切换工作空间" className="mr-px" v={[669, 186, 120, 72]}><circle cx="703" cy="221" r="12" strokeWidth="9" /><circle cx="703" cy="221" r="19" strokeWidth="8" strokeDasharray="7.5 7.42" /><F d="M754 217H777L765.5 228Z" /></Status>
        <Status name="注释监视器" className="mr-[3px]" v={[792, 186, 72, 72]}><P d="M804 222H852M828 198V246" w="5" /></Status>
        <Status name="快捷特性" v={[873, 186, 72, 72]}><F d="M885 198H906V219H885ZM885 222H906V243H885ZM909 222H930V243H909Z" /></Status>
        <Status name="锁定用户界面" v={[945, 186, 75, 72]}><P d="M957 205H970M964 198V212" w="3" /><F d="M974 206H995V216H974ZM970 218H984V232H970Z" /><F d="M979 228H1001V246H979Z" /><P d="M989 228V222A6 6 0 0 1 1002 222V228" /><Sq x={990} y={237} c={K} s={5} /></Status>
        <Status name="硬件加速" on className="mr-0.5" v={[1020, 186, 66, 72]}><P d="M1046 240C1036 240 1037 232 1037 226V209C1037 196 1055 196 1055 209V224C1055 233 1044 233 1044 224V211" c="#fff" /><F d="M1052 227H1074V246H1052Z" c="#fff" /><P d="M1057 227V221A6 6 0 0 1 1069 221V227" c="#fff" /></Status>
        <Status name="隔离对象" className="mr-[3px]" v={[1092, 186, 72, 72]}><rect x="1105" y="199" width="17" height="16" /><circle cx="1142" cy="218" r="9" /><P d="M1123 228L1114 243H1133Z" w="3" /></Status>
        <Status name="自定义" v={[1173, 186, 72, 72]}><P d="M1185 203H1233M1185 222H1233M1185 241H1233" w="5" /></Status>
      </div>
    </footer>
  );
}

export default function App() {
  return (
    <div className="flex min-h-screen flex-col overflow-hidden border border-[#0696d7] bg-[#222933] font-['Noto_Sans','Noto_Sans_CJK_SC',sans-serif] text-[12px] leading-4">
      <Header />
      <Ribbon />
      <DocTabs />
      <Canvas />
      <Footer />
    </div>
  );
}
